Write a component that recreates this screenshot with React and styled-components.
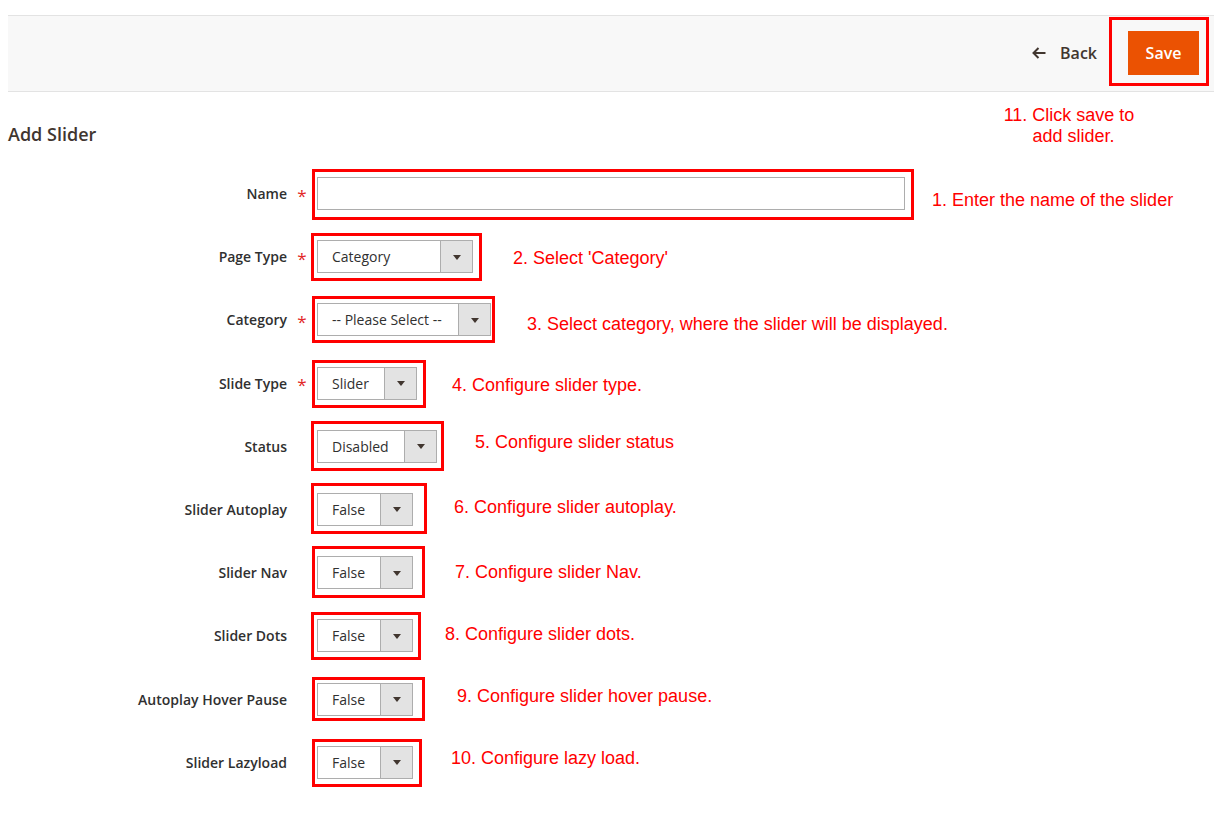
import React from "react";
import styled, { createGlobalStyle } from "styled-components";

const Global = createGlobalStyle`
  html, body { margin: 0; padding: 0; background: #fff; }
  body { font-family: "Open Sans", "Liberation Sans", sans-serif; color: #303030; }
  * { box-sizing: border-box; }
`;

const Page = styled.div`
  padding-left: 8px;
  padding-bottom: 40px;
`;

const Header = styled.div`
  margin-top: 15px;
  height: 77px;
  background: #f8f8f8;
  border-top: 1px solid #e3e3e3;
  border-bottom: 1px solid #e3e3e3;
  display: flex;
  align-items: center;
  justify-content: flex-end;
  padding-right: 15px;
  padding-bottom: 1px;
`;

const BackLink = styled.a`
  display: flex;
  align-items: center;
  gap: 14px;
  font-size: 16px;
  font-weight: 600;
  color: #41362f;
  text-decoration: none;
  margin-right: 31px;
`;

const SaveWrap = styled.div`
  position: relative;
`;

const SaveButton = styled.button`
  height: 44px;
  width: 71px;
  background: #eb5202;
  border: none;
  color: #fff;
  font-family: "Open Sans", sans-serif;
  font-size: 16px;
  font-weight: 600;
  padding: 0;
  display: block;
`;

const RedBox = styled.div`
  position: absolute;
  left: ${(p) => -p.$l}px;
  top: ${(p) => -p.$t}px;
  right: ${(p) => -p.$r}px;
  bottom: ${(p) => -p.$b}px;
  border: 3px solid #ff0000;
  pointer-events: none;
`;

const SaveNote = styled.div`
  position: absolute;
  left: -129px;
  top: 74px;
  width: 140px;
  text-align: center;
  font-family: "Liberation Sans", Arial, sans-serif;
  font-size: 18px;
  line-height: 21px;
  color: #ff0000;
`;

const NoteLine = styled.span`
  display: block;
  padding-left: ${(p) => p.$indent || 0}px;
`;

const Title = styled.h2`
  margin: 30px 0 0 0;
  font-size: 18px;
  line-height: 24px;
  font-weight: 600;
  color: #41362f;
`;

const Form = styled.div`
  margin-top: 31px;
  display: flex;
  flex-direction: column;
  gap: 30.2px;
`;

const Row = styled.div`
  display: flex;
  align-items: center;
  height: 33px;
`;

const Label = styled.label`
  width: 279px;
  text-align: right;
  font-size: 14px;
  font-weight: 600;
  color: #303030;
`;

const Req = styled.span`
  width: 30px;
  text-align: center;
  color: #e22626;
  font-size: 17px;
  line-height: 1;
  padding-top: 3px;
`;

const Control = styled.div`
  position: relative;
  height: 33px;
  width: ${(p) => p.$w}px;
  flex: none;
`;

const TextInput = styled.input`
  width: 100%;
  height: 100%;
  border: 1px solid #adadad;
  background: #fff;
  padding: 0 10px;
  font-family: "Open Sans", sans-serif;
  font-size: 14px;
  display: block;
`;

const SelectBox = styled.div`
  width: 100%;
  height: 100%;
  border: 1px solid #adadad;
  background: #fff;
  display: flex;
  align-items: stretch;
`;

const SelectValue = styled.span`
  flex: 1;
  display: flex;
  align-items: center;
  padding-left: 14px;
  font-size: 14px;
  color: #303030;
  white-space: nowrap;
`;

const SelectButton = styled.span`
  width: 32px;
  flex: none;
  background: #e3e3e3;
  border-left: 1px solid #adadad;
  display: flex;
  align-items: center;
  justify-content: center;
`;

const Caret = styled.span`
  width: 0;
  height: 0;
  border-left: 4px solid transparent;
  border-right: 4px solid transparent;
  border-top: 5px solid #41362f;
  margin-top: 1px;
`;

const Note = styled.span`
  margin-left: ${(p) => p.$ml}px;
  transform: translateY(${(p) => p.$dy}px);
  font-family: "Liberation Sans", Arial, sans-serif;
  font-size: 18px;
  color: #ff0000;
  white-space: nowrap;
`;

const BackArrow = () => (
  <svg width="14" height="12" viewBox="0 0 14 12" fill="none">
    <path d="M6.5 1 L1.5 6 L6.5 11 M1.5 6 H13.5" stroke="#41362f" strokeWidth="2" />
  </svg>
);

const rows = [
  { label: "Name", req: true, input: true, w: 588, box: [5, 8, 9, 10], note: "1. Enter the name of the slider", ml: 27, dy: 7 },
  { label: "Page Type", req: true, value: "Category", w: 156, box: [6, 7, 9, 8], note: "2. Select 'Category'", ml: 40, dy: 2 },
  { label: "Category", req: true, value: "-- Please Select --", w: 174, box: [5, 7, 4, 7], note: "3. Select category, where the slider will be displayed.", ml: 36, dy: 5 },
  { label: "Slide Type", req: true, value: "Slider", w: 100, box: [5, 7, 9, 8], note: "4. Configure slider type.", ml: 35, dy: 2 },
  { label: "Status", value: "Disabled", w: 120, box: [6, 9, 7, 8], note: "5. Configure slider status", ml: 38, dy: -4 },
  { label: "Slider Autoplay", value: "False", w: 96, box: [6, 10, 14, 8], note: "6. Configure slider autoplay.", ml: 41, dy: -2 },
  { label: "Slider Nav", value: "False", w: 96, box: [5, 10, 12, 9], note: "7. Configure slider Nav.", ml: 42, dy: 0 },
  { label: "Slider Dots", value: "False", w: 96, box: [6, 7, 8, 8], note: "8. Configure slider dots.", ml: 32, dy: -1 },
  { label: "Autoplay Hover Pause", value: "False", w: 96, box: [5, 6, 12, 5], note: "9. Configure slider hover pause.", ml: 44, dy: -3 },
  { label: "Slider Lazyload", value: "False", w: 96, box: [5, 7, 9, 8], note: "10. Configure lazy load.", ml: 38, dy: -4 },
];

export default function App() {
  return (
    <Page>
      <Global />
      <Header>
        <BackLink href="#">
          <BackArrow />
          Back
        </BackLink>
        <SaveWrap>
          <SaveButton>Save</SaveButton>
          <RedBox $l={19} $t={14} $r={10} $b={11} />
          <SaveNote>
            <NoteLine>11. Click save to</NoteLine>
            <NoteLine $indent={9}>add slider.</NoteLine>
          </SaveNote>
        </SaveWrap>
      </Header>
      <Title>Add Slider</Title>
      <Form>
        {rows.map((r) => (
          <Row key={r.label}>
            <Label>{r.label}</Label>
            <Req>{r.req ? "*" : ""}</Req>
            <Control $w={r.w}>
              {r.input ? (
                <TextInput type="text" />
              ) : (
                <SelectBox>
                  <SelectValue>{r.value}</SelectValue>
                  <SelectButton>
                    <Caret />
                  </SelectButton>
                </SelectBox>
              )}
              <RedBox $l={r.box[0]} $t={r.box[1]} $r={r.box[2]} $b={r.box[3]} />
            </Control>
            <Note $ml={r.ml} $dy={r.dy}>{r.note}</Note>
          </Row>
        ))}
      </Form>
    </Page>
  );
}
